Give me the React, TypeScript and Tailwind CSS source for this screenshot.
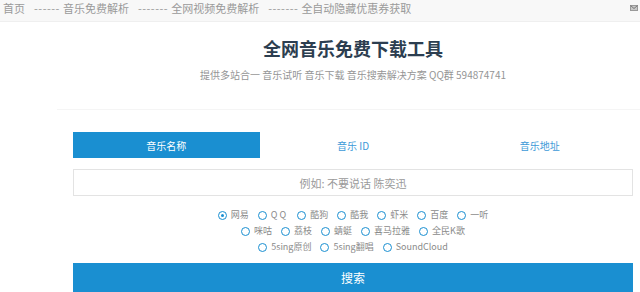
import { useState } from "react";

const navLinks = ["首页", "音乐免费解析", "全网视频免费解析", "全自动隐藏优惠券获取"];
const tabs = ["音乐名称", "音乐 ID", "音乐地址"];
const sources = [
  ["网易", "QQ", "酷狗", "酷我", "虾米", "百度", "一听"],
  ["咪咕", "荔枝", "蜻蜓", "喜马拉雅", "全民K歌"],
  ["5sing原创", "5sing翻唱", "SoundCloud"],
];

function Radio({ label, checked, onPick }: { label: string; checked: boolean; onPick: () => void }) {
  return (
    <label className="flex items-center cursor-pointer" onClick={onPick}>
      <span className="w-[9px] h-[9px] rounded-full border-[1.5px] border-[#1a8fd1] flex items-center justify-center">
        {checked && <span className="w-[3px] h-[3px] rounded-full bg-[#1a8fd1]" />}
      </span>
      <span className={label === "QQ" ? "ml-[4px] tracking-[2px]" : "ml-[4px]"}>{label}</span>
    </label>
  );
}

export default function App() {
  const [tab, setTab] = useState(0);
  const [source, setSource] = useState("网易");

  return (
    <div className="w-[640px] h-[292px] overflow-hidden bg-white font-['Noto_Sans_CJK_SC',sans-serif]">
      <div className="h-[22px] bg-[#f8f8f8] border-b border-[#efefef] flex items-start pl-[3px] pr-[2px] text-[11px] leading-[16px] text-[#9a9a9a]">
        <div className="flex">
          {navLinks.map((link, i) => (
            <span key={link} className="flex">
              {i > 0 && (
                <span className="ml-[9px] mr-[3px] tracking-[0.5px]">{i === 1 ? "------" : "-------"}</span>
              )}
              {link}
            </span>
          ))}
        </div>
        <svg className="ml-auto mt-[5px]" width="8" height="6" viewBox="0 0 8 6">
          <rect x="0.5" y="0.5" width="7" height="5" fill="#c8c8c8" stroke="#999" strokeWidth="1" />
          <path d="M0.5 0.5 L4 3.5 L7.5 0.5" fill="none" stroke="#777" strokeWidth="1" />
        </svg>
      </div>

      <div className="pl-[73px] pr-[7px]">
        <h1 className="mt-[14px] text-center text-[18px] leading-[24px] font-bold text-[#2c3e50]">
          全网音乐免费下载工具
        </h1>
        <p className="mt-[8px] text-center text-[10px] leading-[14px] text-[#959595]">
          提供多站合一 音乐试听 音乐下载 音乐搜索解决方案 QQ群 594874741
        </p>
      </div>

      <div className="mt-[27px] ml-[57px] border-t border-[#f5f5f5] pl-[16px] pr-[7px]">
        <div className="mt-[22px] flex h-[26px] text-[10px]">
          {tabs.map((t, i) => (
            <button
              key={t}
              onClick={() => setTab(i)}
              className={
                i === tab
                  ? "flex-1 bg-[#1a8fd1] text-white"
                  : "flex-1 text-[#3d9ad8]"
              }
            >
              {t}
            </button>
          ))}
        </div>

        <input
          className="mt-[11px] w-full h-[27px] border border-[#e3e3e3] text-center text-[11px] outline-none placeholder:text-[#9a9a9a]"
          placeholder="例如: 不要说话 陈奕迅"
        />

        <div className="mt-[11px] flex flex-col items-center text-[9px] leading-[16px] text-[#8a8a8a]">
          {sources.map((row, r) => (
            <div key={r} className="flex gap-[9px] h-[16px]">
              {row.map((s) => (
                <Radio key={s} label={s} checked={source === s} onPick={() => setSource(s)} />
              ))}
            </div>
          ))}
        </div>

        <button className="mt-[8px] w-full h-[29px] bg-[#1a8fd1] text-white text-[12px]">搜索</button>
      </div>
    </div>
  );
}
